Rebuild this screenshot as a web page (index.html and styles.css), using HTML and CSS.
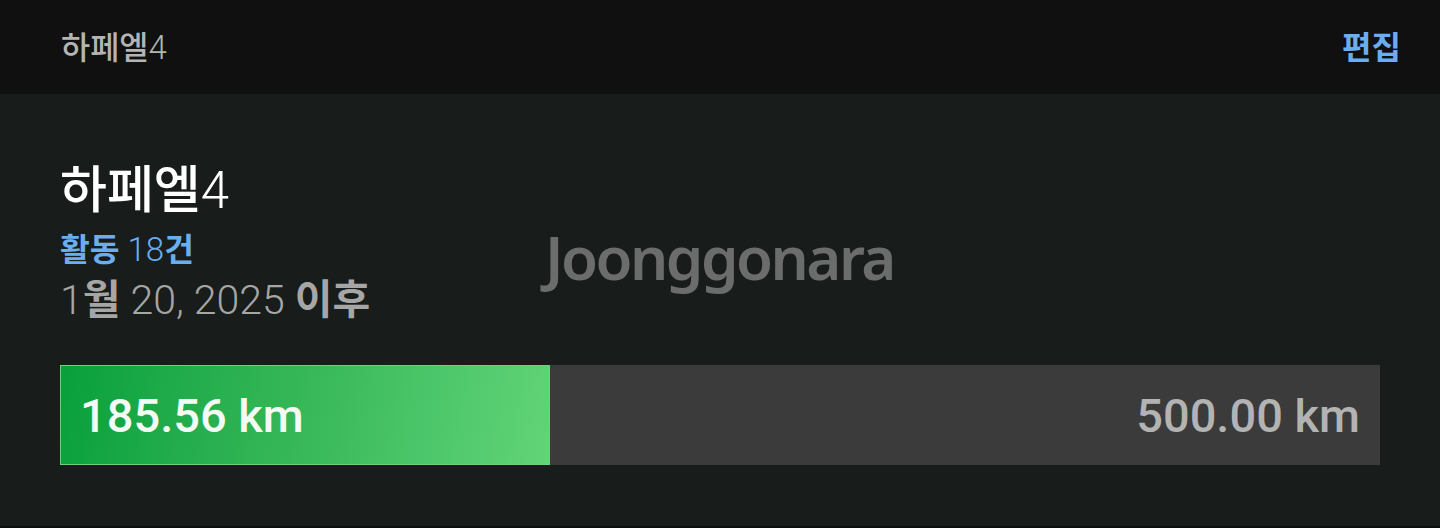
FILE: index.html
```html
<!DOCTYPE html>
<html lang="ko">
<head>
    <meta charset="UTF-8">
    <meta name="viewport" content="width=device-width, initial-scale=1.0">
    <title>하페엘4</title>
    <link rel="stylesheet" href="styles.css">
</head>
<body>
    <header class="top-bar">
        <span class="top-title"><b>하페엘</b>4</span>
        <span class="edit-link">편집</span>
    </header>
    <main class="gear-card">
        <h1 class="gear-name"><b>하페엘</b>4</h1>
        <div class="activity-count"><b>활동</b> 18<b>건</b></div>
        <div class="since-date">1<b>월</b> 20, 2025 <b>이후</b></div>
        <div class="distance-bar">
            <div class="distance-fill" style="width: 37.11%">
                <span class="distance-done">185.56 km</span>
            </div>
            <span class="distance-goal">500.00 km</span>
        </div>
        <div class="watermark">Joonggonara</div>
    </main>
    <div class="bottom-edge"></div>
</body>
</html>
```

FILE: styles.css
```css
* {
    box-sizing: border-box;
    margin: 0;
    padding: 0;
}

body {
    width: 1440px;
    height: 528px;
    background-color: #181c1a;
    font-family: Roboto, "Noto Sans CJK KR", sans-serif;
    overflow: hidden;
}

/* korean glyphs render heavier than the digits */
b {
    font-weight: 700;
}

.top-bar {
    height: 94px;
    background-color: #101010;
    display: flex;
    align-items: center;
    justify-content: space-between;
    padding: 0 39px 0 61px;
}

.top-title {
    color: #b4b4b4;
    font-size: 33px;
    font-weight: 300;
    padding-bottom: 4px;
}

.top-title b {
    font-weight: 500;
    font-size: 0.96em;
}

.edit-link {
    color: #6aaef0;
    font-size: 32px;
    font-weight: 700;
    padding-bottom: 4px;
}

.gear-card {
    position: relative;
    height: 432px;
    padding: 67px 60px 0;
}

.gear-name {
    color: #ffffff;
    font-size: 51px;
    font-weight: 300;
    line-height: 60px;
}

.gear-name b {
    font-weight: 500;
}

.activity-count {
    color: #6aaef0;
    font-size: 33px;
    font-weight: 300;
    line-height: 40px;
    margin-top: 9px;
}

.activity-count b {
    font-size: 0.98em;
}

.since-date {
    color: #a6a6a6;
    font-size: 41px;
    font-weight: 300;
    line-height: 46px;
    margin-top: 7px;
}

.distance-bar {
    margin-top: 42px;
    height: 100px;
    background-color: #3b3b3b;
    display: flex;
    align-items: center;
    justify-content: space-between;
}

.distance-fill {
    height: 100%;
    display: flex;
    align-items: center;
    padding-left: 19px;
    border: 1px solid #6cd37c;
    background: linear-gradient(100deg, #08a03a 0%, #22ac4c 25%, #38b858 50%, #4cc66a 75%, #62d477 100%);
    white-space: nowrap;
}

.distance-done {
    color: #f4fbf5;
    font-size: 47px;
    font-weight: 500;
}

.distance-goal {
    color: #b2b3b2;
    font-size: 47px;
    font-weight: 500;
    padding-right: 20px;
}

.watermark {
    position: absolute;
    left: 545px;
    top: 133px;
    color: #6a6d6b;
    font-family: "Noto Sans", sans-serif;
    font-size: 60px;
    font-weight: 600;
    line-height: 60px;
    letter-spacing: -2.5px;
}

.bottom-edge {
    height: 2px;
    background-color: #0e100f;
}
```
